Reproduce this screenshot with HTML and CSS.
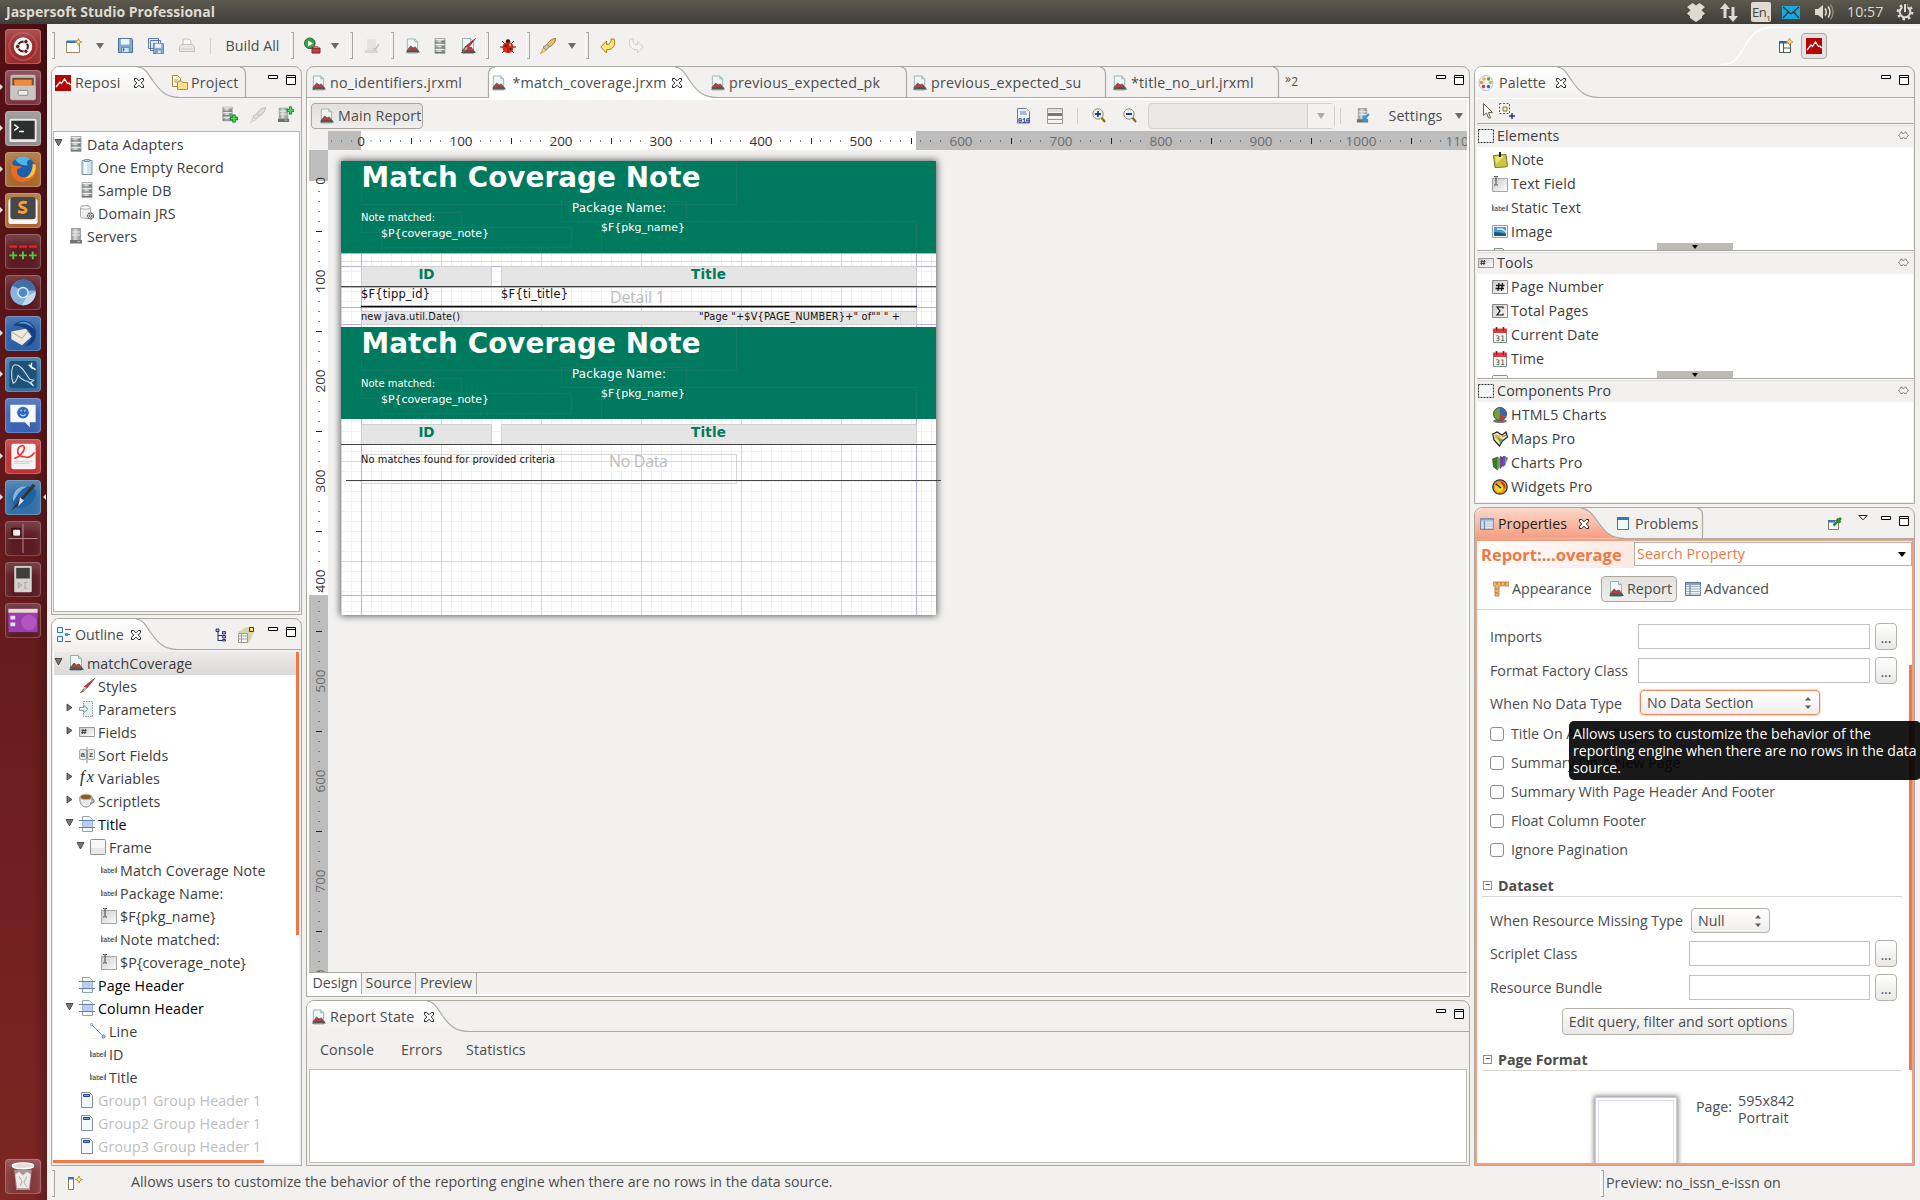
FILE: index.html
```html
<!DOCTYPE html>
<html lang="en">
<head>
<meta charset="utf-8">
<title>Jaspersoft Studio Professional</title>
<link rel="stylesheet" href="styles.css">
</head>
<body>
<svg class="defs" width="0" height="0">
<defs>
<linearGradient id="gTab" x1="0" y1="0" x2="0" y2="1"><stop offset="0" stop-color="#fff"/><stop offset="1" stop-color="#f2f1f0"/></linearGradient>
<linearGradient id="gOrange" x1="0" y1="0" x2="0" y2="1"><stop offset="0" stop-color="#fbd9cb"/><stop offset="1" stop-color="#f59d7e"/></linearGradient>
<linearGradient id="gGrey" x1="0" y1="0" x2="1" y2="1"><stop offset="0" stop-color="#c9c9c9"/><stop offset="1" stop-color="#fff"/></linearGradient>
<linearGradient id="gDb" x1="0" y1="0" x2="1" y2="0"><stop offset="0" stop-color="#8f9191"/><stop offset=".4" stop-color="#dadcdc"/><stop offset="1" stop-color="#8d8f8f"/></linearGradient>
<pattern id="hticks" x="33" y="0" width="100" height="19" patternUnits="userSpaceOnUse">
<path d="M20 9v2M30 9v2M40 9v2M60 9v2M70 9v2M80 9v2" transform="translate(-.5)" stroke="#777"/><path d="M10.500 9v2M90.500 9v2" stroke="#999" transform="translate(-.5)"/><path d="M50.500 7v6" stroke="#222"/></pattern>
<pattern id="vticks" x="0" y="31" width="19" height="100" patternUnits="userSpaceOnUse">
<path d="M9 10.500h2M9 20.500h2M9 30.500h2M9 40.500h2M9 60.500h2M9 70.500h2M9 80.500h2M9 90.500h2" stroke="#777"/><path d="M7 50.500h6" stroke="#222"/></pattern>
<pattern id="grid" x="0" y="0" width="10" height="10" patternUnits="userSpaceOnUse"><path d="M.5 0v10M0 .5h10" stroke="#f1f1f1"/></pattern>
<pattern id="gridbig" x="0" y="0" width="100" height="100" patternUnits="userSpaceOnUse"><path d="M.5 0v100M0 .5h100" stroke="#d8d8d8"/></pattern>

<symbol id="close" viewBox="0 0 12 12"><path d="M1.500 1.500h2.200L6 3.800l2.300-2.300h2.200v2.200L8.200 6l2.300 2.300v2.200H8.300L6 8.200l-2.300 2.300H1.500V8.300L3.800 6 1.500 3.700z" fill="#fff" stroke="#222"/></symbol>
<symbol id="winctl" viewBox="0 0 28 12"><path d="M.5 1.500h9v3h-9zM18.500 1.500h9v9h-9zM18 3.500h10" fill="#fff" stroke="#000"/></symbol>
<symbol id="down" viewBox="0 0 8 6"><path d="M0 0h8L4 6z" fill="#6b6b6b"/></symbol>
<symbol id="open" viewBox="0 0 9 9"><path d="M1 1.500h7L4.500 8z" fill="#777" stroke="#333" stroke-width=".8"/></symbol>
<symbol id="shut" viewBox="0 0 9 9"><path d="M2 1v7l5-3.500z" fill="#777" stroke="#333" stroke-width=".8"/></symbol>
<symbol id="jasper" viewBox="0 0 16 16"><path d="M0 0h16v16H0z" fill="#b30505"/><path d="M1 12l4-5 1.500 1.500L9.500 4l3 4.500L14 8l1.500 2" fill="none" stroke="#fff" stroke-width="1.300"/></symbol>
<symbol id="report" viewBox="0 0 16 16"><path d="M2.500.5h8l3 3v12h-11z" fill="#eef6f6" stroke="#9ab0ae"/><path d="M10.500.5v3h3" fill="#cfe0df" stroke="#9ab0ae"/><path d="M2 13l4-5 2.500 2L11 9l3.500 4.500z" fill="#b5403f" stroke="#444" stroke-width=".7"/><path d="M1 15l1.500-2h12L16 15z" fill="#4d5555"/></symbol>
<symbol id="db" viewBox="0 0 16 16"><path d="M3 .5h10v15H3z" fill="url(#gDb)" stroke="#9a9c9c" stroke-width=".8"/><path d="M3 5h10M3 10h10M3 14.500h10" stroke="#777" stroke-width="1.100"/><path d="M3.500 1.500h9M3.500 6.500h9M3.500 11.500h9" stroke="#eee"/><path d="M10 3.500h2M10 8.500h2M10 13h2" stroke="#5a8a5a"/></symbol>
<symbol id="server" viewBox="0 0 16 16"><path d="M3.500.5h9v12h-9z" fill="url(#gDb)" stroke="#a0a2a2"/><path d="M4 4h8M4 7h8" stroke="#f0f0f0"/><path d="M2 12h12v3.500H2z" fill="#6f7371"/><path d="M9 13.500h3" stroke="#9c9"/></symbol>
<symbol id="dbplus" viewBox="0 0 16 16"><use href="#db" x="-2" width="15" height="15"/><path d="M12 8v8M8 12h8" stroke="#0d8a1c" stroke-width="3.500"/><path d="M12 9v6M9 12h6" stroke="#4fe05a" stroke-width="1.600"/></symbol>
<symbol id="srvplus" viewBox="0 0 16 16"><use href="#server" x="-2" y="1" width="15" height="15"/><path d="M12.500 0v8M8.500 4h8" stroke="#0d8a1c" stroke-width="3.200"/><path d="M12.500 1v6M9.500 4h6" stroke="#4fe05a" stroke-width="1.500"/></symbol>
<symbol id="clip" viewBox="0 0 16 16"><path d="M3 1.500h10v14H3z" fill="#cfe2f2" stroke="#7c93a8"/><path d="M5 3h3v12H5z" fill="#f3f9fe"/><path d="M5.500.5h5v2h-5z" fill="#b8c8d5" stroke="#7c93a8"/></symbol>
<symbol id="domain" viewBox="0 0 16 16"><path d="M1.500 2.500c0-2.500 10-2.500 10 0v9c0 2.500-10 2.500-10 0z" fill="#f0f0f0" stroke="#aaa"/><ellipse cx="6.500" cy="2.500" rx="5" ry="1.700" fill="#fff" stroke="#aaa"/><circle cx="11.500" cy="11" r="3" fill="#ddd" stroke="#666" stroke-width="1.500" stroke-dasharray="2 .8"/><circle cx="11.500" cy="11" r="1.200" fill="#fff" stroke="#666"/></symbol>
<symbol id="label" viewBox="0 0 16 16"><text x="1" y="10.500" font-family="Liberation Sans" font-size="7.500" textLength="14" lengthAdjust="spacingAndGlyphs" fill="#222">label</text><path d="M.5 4.500v6.500M15.500 4.500v6.500" stroke="#777"/></symbol>
<symbol id="field" viewBox="0 0 16 16"><path d="M.5 2.500h15v13H.5z" fill="url(#gGrey)" stroke="#a5a5a5"/><path d="M2 .5h1.500l.5.5.5-.5H6M4 1v7M2 9h1.500l.5-.5.5.5H6" fill="none" stroke="#444"/></symbol>
<symbol id="frame" viewBox="0 0 16 16"><rect x=".5" y=".5" width="15" height="15" rx="1" fill="#f8f8f8" stroke="#8f8f8f"/><path d="M1 9h14v6H1z" fill="#e8e8e8"/></symbol>
<symbol id="band" viewBox="0 0 16 16"><path d="M3.500.5h7l3 3v12h-10z" fill="#f3f9f8" stroke="#8fa5a2"/><path d="M3.500 5h10v6h-10z" fill="#b9cdf5"/><path d="M0 4.500h16M0 11.500h16" stroke="#5f7eb8"/></symbol>
<symbol id="group" viewBox="0 0 16 16"><path d="M2.500.5h8l3 3v12h-11z" fill="#f1f9fa" stroke="#7f9290"/><path d="M4.500 2.500h6v2h-6z" fill="#7ea0ef" stroke="#233fb0"/></symbol>
<symbol id="brush" viewBox="0 0 16 16"><path d="M15.500.5l-8 10-2-2z" fill="#c33" stroke="#822" stroke-width=".8"/><path d="M7 8.500L3.500 12l2 .5L8 10z" fill="#bbb" stroke="#777" stroke-width=".6"/><path d="M4.500 11L.5 15.500l4.500-2z" fill="#8a5a2a"/></symbol>
<symbol id="param" viewBox="0 0 16 16"><path d="M4.500.5h9v15h-9z" fill="#e4efef" stroke="#7f9a98" stroke-dasharray="1.500 1"/><path d="M.5 6.500H5v-2L9 8l-4 3.500v-2H.5z" fill="#f3f9f9" stroke="#7f9a98"/></symbol>
<symbol id="hash" viewBox="0 0 16 16"><path d="M.5 3.500h15v9H.5z" fill="url(#gGrey)" stroke="#9a9a9a"/><path d="M4 5l-.7 5M6.500 5l-.7 5M2.500 6.500h5M2.300 8.500h5" stroke="#333" stroke-width=".9"/></symbol>
<symbol id="sort" viewBox="0 0 16 16"><rect x=".5" y="2.500" width="7" height="10" rx="1.500" fill="#e9e9e9" stroke="#aaa"/><rect x="8.500" y="2.500" width="7" height="10" rx="1.500" fill="#e9e9e9" stroke="#aaa"/><path d="M8 0v16" stroke="#888"/><text x="1.500" y="10" font-family="Liberation Sans" font-size="8" font-weight="bold" fill="#555">a</text><text x="10" y="10" font-family="Liberation Sans" font-size="8" font-weight="bold" fill="#555">z</text></symbol>
<symbol id="fx" viewBox="0 0 16 16"><text x="1" y="12" font-family="Liberation Serif" font-style="italic" font-size="16" fill="#222" textLength="14">fx</text></symbol>
<symbol id="cup" viewBox="0 0 16 16"><path d="M1 4h12c1 6-2 10-6 10S0 10 1 4z" fill="#ececec" stroke="#888"/><ellipse cx="7" cy="4" rx="6" ry="2.800" fill="#8a5a2a" stroke="#c9b9a0"/><path d="M12.500 6c4 0 3 4-1.500 4.500" fill="none" stroke="#888" stroke-width="1.300"/></symbol>
<symbol id="line" viewBox="0 0 16 16"><path d="M1.500 1.500l12 12" stroke="#6f9ad8"/><path d="M1 15.500h12" stroke="#eee"/><circle cx="1.500" cy="1.500" r="1.200" fill="#fff" stroke="#6f9ad8"/><circle cx="13.500" cy="13.500" r="1.500" fill="#bcd" stroke="#4a7acb"/></symbol>
<symbol id="rocket" viewBox="0 0 16 16"><path d="M15.500.5c-3 0-6 2-8.500 6l2.500 2.500c4-2.500 6-5 6-8.500z" fill="#f0c060" stroke="#8a5a20" stroke-width=".8"/><path d="M7 6.500L3 9l3 3 3.500-3z" fill="#c5c5c5" stroke="#777" stroke-width=".8"/><path d="M3.500 10L.5 15.500 6 12.500z" fill="#ffe37a" stroke="#c98a10" stroke-width=".8"/></symbol>
<symbol id="date" viewBox="0 0 16 16"><path d="M1.500 5.500h13v10h-13z" fill="#f6f8f7" stroke="#7c8a88"/><path d="M1 1.500h14v4.500H1z" fill="#dc3b40"/><path d="M4.500 0v3.500M11.500 0v3.500" stroke="#8c1015" stroke-width="1.500"/><text x="3.300" y="13.500" font-family="DejaVu Sans" font-size="7.500" fill="#1d4a44">31</text></symbol>
<symbol id="table" viewBox="0 0 16 14"><path d="M.5.5h15v13H.5z" fill="#eef4fb" stroke="#5d7797"/><path d="M1 1h14v2H1z" fill="#7fa2cc"/><path d="M1 4.500h15M1 7h15M1 9.500h15M1 12h15" stroke="#a0b0c4"/><path d="M5 3v10" stroke="#5d7797"/></symbol>
<symbol id="dash" viewBox="0 0 16 16"><path d="M.5 1.500h15v13H.5z" fill="#f4f6f6" stroke="#333" stroke-dasharray="2 1"/></symbol>
<symbol id="pin" viewBox="0 0 11 9"><path d="M3.500.8L.8 4.500l2.700 3.700L5.500 6M7.500.8l2.700 3.700-2.700 3.700L5.500 6M3.500.8l2 2.200 2-2.200" fill="none" stroke="#555" stroke-dasharray="1.300 .6"/></symbol>
<symbol id="spin" viewBox="0 0 6 12"><path d="M0 3.500l3-3.500 3 3.500zM0 8.500L3 12l3-3.500z" fill="#5c5c5c"/></symbol>
<symbol id="floppy" viewBox="0 0 16 16"><path d="M.5.5h14l1 1v14H.5z" fill="#86a9d4" stroke="#3f6699"/><path d="M3 1h9v6H3z" fill="#f1f5fb"/><path d="M4 10h8v5.500H4z" fill="#d8e2ee" stroke="#3f6699" stroke-width=".7"/><path d="M6 11v3" stroke="#3f6699" stroke-width="1.500"/></symbol>
</defs></svg>

<header class="topbar">
<span class="apptitle">Jaspersoft Studio Professional</span>
<div class="tray">
<svg width="18" height="20" viewBox="0 0 18 20"><path d="M5.500 1L9 3.500 12.500 1 18 5l-3.500 3.200L18 11.500l-3 2.500v2l-6 4-6-4v-2L0 11.500l3.500-3.300L0 5z" fill="#dfdbd2"/></svg>
<svg width="18" height="20" viewBox="0 0 18 20"><path d="M5 1l5 6H6.500v9h-3V7H0zM13 20l-5-6h3.500V5h3v9H18z" fill="#dfdbd2"/></svg>
<span class="kbd">En<sub>1</sub></span>
<svg width="18" height="13" viewBox="0 0 18 13"><path d="M0 0h18v13H0z" fill="#19a7e0"/><path d="M1 1l8 7 8-7M1 12l5.500-6M17 12l-5.500-6" fill="none" stroke="#33322e" stroke-width="1.200"/></svg>
<svg width="20" height="18" viewBox="0 0 20 18"><path d="M0 6h3l5-4v14l-5-4H0z" fill="#dfdbd2"/><path d="M10 5.500q2.500 3.500 0 7M13 3.500q4 5.500 0 11" fill="none" stroke="#dfdbd2" stroke-width="1.600"/><path d="M15.500 1.500q5 7.500 0 15" fill="none" stroke="#8c897f" stroke-width="1.400"/></svg>
<span class="clock">10:57</span>
<svg width="18" height="18" viewBox="0 0 18 18"><circle cx="9" cy="9" r="5.300" fill="none" stroke="#dfdbd2" stroke-width="2"/><circle cx="9" cy="9" r="7.200" fill="none" stroke="#dfdbd2" stroke-width="2.400" stroke-dasharray="2.500 3.150"/><path d="M9 0v9" stroke="#45443f" stroke-width="4.500"/><path d="M9 1v8" stroke="#dfdbd2" stroke-width="2"/></svg>
</div>
</header>

<div class="desktop">
<nav class="launcher">
<div class="tile t-red"><svg viewBox="0 0 36 36"><circle cx="18" cy="18" r="14" fill="none" stroke="#d78a8a" stroke-width="2" opacity=".35"/><circle cx="18" cy="18" r="9.500" fill="#fff"/><circle cx="18" cy="18" r="5" fill="none" stroke="#5c1a1c" stroke-width="2.200"/><circle cx="12.500" cy="18" r="2.200" fill="#5c1a1c" stroke="#fff" stroke-width=".8"/><circle cx="21" cy="13" r="2.200" fill="#5c1a1c" stroke="#fff" stroke-width=".8"/><circle cx="21" cy="23" r="2.200" fill="#5c1a1c" stroke="#fff" stroke-width=".8"/></svg></div>
<div class="tile t-rose run"><svg viewBox="0 0 36 36"><rect x="5" y="5" width="26" height="26" rx="2" fill="#bdb9b3"/><path d="M7 8h22v8H7z" fill="#6b4b35"/><path d="M9 10h18v6H9z" fill="#f08b3e"/><path d="M5 16h26v14H5z" fill="#c9c6c1"/><rect x="13" y="21" width="10" height="5" rx="1" fill="#eee" stroke="#888"/></svg></div>
<div class="tile t-grey run"><svg viewBox="0 0 36 36"><rect x="4" y="8" width="28" height="24" rx="2" fill="#e8e8e8"/><path d="M6 10h24v19H6z" fill="#2c2f2e"/><path d="M9 14l4 3-4 3M14 21h5" fill="none" stroke="#fff" stroke-width="1.500"/></svg></div>
<div class="tile t-orange run"><svg viewBox="0 0 36 36"><circle cx="18" cy="18" r="13" fill="#1d5fa8"/><path d="M10 8a11 11 0 0 1 16 0c-4 0-5 3-3 6-5 0-9-1-13-6z" fill="#4fb4e6"/><path d="M6 10c-3 12 2 21 12 21 9 0 15-7 13-17-1 6-5 12-12 12-6 0-8-4-7-8 2-2 5-1 4-3-4-1-9 0-10-5z" fill="#ee6a1c"/><path d="M31 13c1 7-3 15-12 14 6-2 9-8 9-15z" fill="#ffc23a"/></svg></div>
<div class="tile t-orange run"><svg viewBox="0 0 36 36"><rect x="3" y="6" width="30" height="26" rx="3" fill="#f4f4f4"/><rect x="5" y="4" width="26" height="23" rx="3" fill="#45484a"/><path d="M22 10c-7-2-10 3-4 5s3 7-5 4" fill="none" stroke="#ff9a2e" stroke-width="3"/></svg></div>
<div class="tile t-dark"><svg viewBox="0 0 36 36"><path d="M4 13h8M14 13h8M24 13h8" stroke="#f02020" stroke-width="2.500"/><path d="M8 18v8M4 22h8M18 18v8M14 22h8M28 18v8M24 22h8" stroke="#51c646" stroke-width="2"/></svg></div>
<div class="tile t-dark"><svg viewBox="0 0 36 36"><circle cx="18" cy="18" r="13" fill="#8bb4dc"/><path d="M7 11a13 13 0 0 1 24 5H18z" fill="#3f6fa5"/><path d="M31 17a13 13 0 0 1-14 14l5-9z" fill="#c3dcf3"/><circle cx="18" cy="18" r="6" fill="#e5effa"/><circle cx="18" cy="18" r="4.500" fill="#5089c8"/></svg></div>
<div class="tile t-blue run"><svg viewBox="0 0 36 36"><path d="M8 10C14 2 29 3 31 16c1 9-4 15-11 15 5-3 7-8 6-13-4-6-11-8-18-8z" fill="#153f80"/><path d="M12 8c6-4 14-2 17 5-5-5-11-6-17-5z" fill="#4d9ad6"/><path d="M6 16l15-3 6 8-10 9L6 24z" fill="#f0e8dc"/><path d="M7 17l10 6 6-8" fill="none" stroke="#b0a490"/></svg></div>
<div class="tile t-teal run"><svg viewBox="0 0 36 36"><rect x="4" y="4" width="28" height="28" rx="2" fill="#1f5277"/><path d="M8 27C5 20 6 8 10 8c7 0 11 10 15 15l4 1-3 2 3 4-6-5c-5 0-8-4-10-6-1 3-2 7-5 8z" fill="none" stroke="#cfe4f2" stroke-width="1.100"/><path d="M24 8l4 4M27 6l-1 4 5 3" stroke="#fff" stroke-width="1.500" fill="none"/></svg></div>
<div class="tile t-royal"><svg viewBox="0 0 36 36"><path d="M5 7h26v18h-6v5l-5-5H5z" fill="#f6fafe"/><circle cx="18" cy="15" r="6" fill="#2e66c4"/><path d="M16 12v2M20 12v2M15 17q3 3 6 0" stroke="#fff" fill="none"/></svg></div>
<div class="tile t-crimson run"><svg viewBox="0 0 36 36"><rect x="6" y="5" width="25" height="26" rx="2" fill="#f7f4f3"/><path d="M9 20c8-2 13-12 9-13-6-1-8 9-1 11s10 0 13-4" fill="none" stroke="#e33" stroke-width="1.700"/><path d="M9 23h19M9 25h16" stroke="#ccc"/></svg></div>
<div class="tile t-teal run active"><svg viewBox="0 0 36 36"><ellipse cx="19" cy="18" rx="14" ry="9" transform="rotate(-40 19 18)" fill="#1f62a3"/><path d="M8 23C6 12 14 5 22 7c-7 3-10 8-14 16z" fill="#86b3dc"/><path d="M5 32L28 4l3 2L12 27z" fill="#333"/><path d="M15 18l4 3-6 6z" fill="#ddd"/></svg></div>
<div class="tile t-dark"><svg viewBox="0 0 36 36"><path d="M18 3v30M3 18h30" stroke="#b98a8c"/><path d="M6 7h10v8H6z" fill="#3c0d12"/><path d="M8.500 9.500h6v5h-6z" fill="#eee" stroke="#fff"/></svg></div>
<div class="tile t-dark"><svg viewBox="0 0 36 36"><rect x="9" y="4" width="18" height="27" rx="1" fill="#d5d3d1"/><path d="M11 6h14v11H11z" fill="#3d3f3f"/><path d="M13 21l4 3-4 3zM19 21h4M19 27h4M20 21v6" stroke="#aaa" fill="#bbb"/></svg></div>
<div class="tile t-dark"><svg viewBox="0 0 36 36"><rect x="3" y="6" width="30" height="24" fill="#9a3fae"/><path d="M3 6h30v4H3z" fill="#e6dfcf"/><circle cx="24" cy="20" r="8" fill="#c763cf" opacity=".6"/><path d="M5 13h5v4H5zM5 20h5v4H5z" fill="#eadcf0"/></svg></div>
<div class="tile t-trash"><svg viewBox="0 0 36 36"><ellipse cx="18" cy="7" rx="11" ry="3" fill="#ddd" stroke="#fff" stroke-width="1.500"/><path d="M9 11l2 21h14l2-21z" fill="#b9a9a9" opacity=".8"/><path d="M10 16l4-3 4 4 4-4 4 3-2 14H12z" fill="#eceae8"/><path d="M14 18l3 5-2 5M22 18l-3 6 3 5" stroke="#aaa" fill="none"/></svg></div>
</nav>

<div class="ide">
<div class="toolbar">
<i class="handle"></i>
<svg width="17" height="16" viewBox="0 0 17 16"><path d="M.5 3.500h13v11H.5z" fill="#f7fbff" stroke="#9a8a55"/><path d="M.5 2.500h11v2.500H.5z" fill="#3b74b8"/><path d="M12.500.5l1 2.500 2.500 1-2.500 1-1 2.500-1-2.500-2.500-1 2.500-1z" fill="#ffe79a" stroke="#b58a1a" stroke-width=".8"/></svg>
<svg width="8" height="6"><use href="#down"/></svg>
<svg width="15" height="15"><use href="#floppy"/></svg>
<svg width="16" height="16" viewBox="0 0 16 16"><path d="M.5.5h10v10H.5zM2.500 2.500h10v10h-10z" fill="#dfe8f3" stroke="#5d7ba5"/><use href="#floppy" x="5" y="5" width="11" height="11"/></svg>
<svg width="16" height="16" viewBox="0 0 16 16" opacity=".45"><path d="M4 1h6l2 2v5H4z" fill="#fff" stroke="#888"/><path d="M.5 8.500l2-2h11l2 2v5H.5z" fill="#ddd" stroke="#888"/><path d="M2 11h12" stroke="#999"/></svg>
<i class="sep"></i>
<span class="buildall">Build All</span>
<i class="handle"></i>
<svg width="17" height="17" viewBox="0 0 17 17"><circle cx="5.800" cy="6.300" r="5.300" fill="#3aa04a" stroke="#1c6b2a"/><path d="M4 3.500l5 3-5 3z" fill="#fff"/><path d="M8 11h8v5H8z" fill="#c33a3a" stroke="#8a1c1c"/><path d="M10 11V9.500h4V11M8 13.500h8" stroke="#a55" fill="none" stroke-width=".8"/></svg>
<svg width="8" height="6"><use href="#down"/></svg>
<i class="handle"></i>
<svg width="16" height="16" viewBox="0 0 16 16" opacity=".35"><path d="M3 1h9v11H3z" fill="#ccc"/><path d="M1 12h13v3H1z" fill="#aaa"/><path d="M9 10l2 2 4-6" stroke="#777" fill="none" stroke-width="1.500"/></svg>
<i class="handle"></i>
<svg width="15" height="16"><use href="#report"/></svg>
<svg width="16" height="16"><use href="#db"/></svg>
<svg width="16" height="16"><use href="#report"/><use href="#brush"/></svg>
<i class="handle"></i>
<svg width="16" height="16" viewBox="0 0 16 16"><path d="M2 3l3 3M14 3l-3 3M0 9h16M2 15l3-3M14 15l-3-3" stroke="#222"/><circle cx="8" cy="3.500" r="2.300" fill="#222"/><ellipse cx="8" cy="9.500" rx="5.500" ry="5.500" fill="#d92c0d"/><path d="M8 4v11" stroke="#8a1403"/><circle cx="5.500" cy="8" r="1" fill="#300"/><circle cx="10.500" cy="11" r="1" fill="#300"/><circle cx="10" cy="7" r="1.200" fill="#ff9a6a"/></svg>
<i class="handle"></i>
<svg width="16" height="16"><use href="#rocket"/></svg>
<svg width="8" height="6"><use href="#down"/></svg>
<i class="handle"></i>
<svg width="16" height="16" viewBox="0 0 16 16"><path d="M.8 9L6.500 3v3.500C11 6.500 11 4 11 1l3 0c2 5 0 11-7.500 10.800V15z" fill="#ffe27a" stroke="#a87a10"/></svg>
<svg width="16" height="16" viewBox="0 0 16 16"><path d="M15.200 9L9.500 3v3.500C5 6.500 5 4 5 1L2 1c-2 5 0 11 7.500 10.800V15z" fill="#f4f3f2" stroke="#d0cfcc"/></svg>
<div class="perspective">
<svg class="curve" width="210" height="41" viewBox="0 0 210 41"><path d="M0 39.500H4C26 38 22 6 48 2.500H210" fill="none" stroke="#fff" stroke-width="1.500"/></svg>
<svg width="14" height="16" viewBox="0 0 14 16"><path d="M.5 3.500h11v11H.5z" fill="#fff" stroke="#4a5f4f"/><path d="M0 3h10v2.500H0z" fill="#2d62ab"/><path d="M4.500 5v9M4.500 10h7" stroke="#4a5f4f"/><path d="M10.500 0l1 2.500L14 4l-2.500 1-1 2.500-1-2.500L7 4l2.500-1.500z" fill="#ffe17a" stroke="#a8861a" stroke-width=".7"/></svg>
<span class="pbtn"><svg width="16" height="16"><use href="#jasper"/></svg></span>
</div>
</div>

<main class="panels">
<div class="col">
<section class="panel repo">
<div class="head head-repo">
<svg class="shape" width="249" height="31"><path d="M0 31V0H86C94 1 96 7 101 14C108 24 114 30.500 128 30.500z" fill="url(#gTab)"/><path d="M86 0C94 1 96 7 101 14C108 24 114 30.500 128 30.500H249M188 0q5.500 1 5.500 7v24" fill="none" stroke="#aaa9a2" stroke-width="1.200"/></svg>
<svg width="16" height="16"><use href="#jasper"/></svg><span>Reposi</span><svg width="12" height="12"><use href="#close"/></svg><b></b>
<svg width="16" height="16" viewBox="0 0 16 16"><path d="M.5.5h5l3 3v8h-8z" fill="#fff8dc" stroke="#a08840"/><path d="M2 5h4M2 7h4" stroke="#a98"/><path d="M5.500 7.500l1-1.500h3l1 1.500h5v7h-10z" fill="#fce08a" stroke="#b58a2a"/></svg><span>Project</span>
<svg class="ctl" width="28" height="12"><use href="#winctl"/></svg>
</div>
<div class="minibar"><svg width="16" height="17"><use href="#dbplus"/></svg><svg width="16" height="16" class="dis"><use href="#rocket"/></svg><svg width="16" height="17"><use href="#srvplus"/></svg></div>
<ul class="tree boxed">
<li><svg class="tw"><use href="#open"/></svg><svg class="ic"><use href="#db"/></svg><span>Data Adapters</span></li>
<li class="l1"><i class="tw"></i><svg class="ic"><use href="#clip"/></svg><span>One Empty Record</span></li>
<li class="l1"><i class="tw"></i><svg class="ic"><use href="#db"/></svg><span>Sample DB</span></li>
<li class="l1"><i class="tw"></i><svg class="ic"><use href="#domain"/></svg><span>Domain JRS</span></li>
<li><i class="tw"></i><svg class="ic"><use href="#server"/></svg><span>Servers</span></li>
</ul>
</section>
<section class="panel outline">
<div class="head head-outline">
<svg class="shape" width="249" height="31"><path d="M0 31V0H84C92 1 94 7 99 14C106 24 112 30.500 126 30.500z" fill="url(#gTab)"/><path d="M84 0C92 1 94 7 99 14C106 24 112 30.500 126 30.500H249" fill="none" stroke="#aaa9a2" stroke-width="1.200"/></svg>
<svg width="14" height="16" viewBox="0 0 14 16"><path d="M.5.5h5v5h-5zM.5 9.500h5v5h-5z" fill="#e8f3fb" stroke="#2a76b0"/><path d="M8 2.500h6M8 7.500h5M8 14.500h6" stroke="#2a76b0"/><path d="M8 6h3v3H8z" fill="#4e93c8"/></svg><span>Outline</span><svg width="12" height="12"><use href="#close"/></svg><b></b>
<svg width="12" height="14" viewBox="0 0 12 14"><path d="M3 3v9.500h4M3 7.500h4" fill="none" stroke="#222a6a"/><path d="M1 1h3v2.500H1zM7.500 3.500h3V6h-3zM7.500 7.500h3V10h-3zM7.500 11.500h3V13h-3z" fill="#aac" stroke="#222a6a" stroke-width=".9"/></svg>
<svg width="16" height="16" viewBox="0 0 16 16"><path d="M0 5L8 0h8v5l-5 11H0z" fill="#d8d6b0"/><path d="M.5 6.500h9v9h-9zM.5 9h9M.5 12h9M3.500 7v8" fill="#fff" stroke="#999"/><path d="M11.500.5h4v4h-4z" fill="#ffe45a" stroke="#333"/></svg>
<svg class="ctl" width="28" height="12"><use href="#winctl"/></svg>
</div>
<div class="outbody">
<ul class="tree">
<li class="sel"><svg class="tw"><use href="#open"/></svg><svg class="ic"><use href="#report"/></svg><span>matchCoverage</span></li>
<li class="l1"><i class="tw"></i><svg class="ic"><use href="#brush"/></svg><span>Styles</span></li>
<li class="l1"><svg class="tw"><use href="#shut"/></svg><svg class="ic"><use href="#param"/></svg><span>Parameters</span></li>
<li class="l1"><svg class="tw"><use href="#shut"/></svg><svg class="ic"><use href="#hash"/></svg><span>Fields</span></li>
<li class="l1"><i class="tw"></i><svg class="ic"><use href="#sort"/></svg><span>Sort Fields</span></li>
<li class="l1"><svg class="tw"><use href="#shut"/></svg><svg class="ic"><use href="#fx"/></svg><span>Variables</span></li>
<li class="l1"><svg class="tw"><use href="#shut"/></svg><svg class="ic"><use href="#cup"/></svg><span>Scriptlets</span></li>
<li class="l1 dk"><svg class="tw"><use href="#open"/></svg><svg class="ic"><use href="#band"/></svg><span>Title</span></li>
<li class="l2"><svg class="tw"><use href="#open"/></svg><svg class="ic"><use href="#frame"/></svg><span>Frame</span></li>
<li class="l3"><i class="tw"></i><svg class="ic"><use href="#label"/></svg><span>Match Coverage Note</span></li>
<li class="l3"><i class="tw"></i><svg class="ic"><use href="#label"/></svg><span>Package Name:</span></li>
<li class="l3"><i class="tw"></i><svg class="ic"><use href="#field"/></svg><span>$F{pkg_name}</span></li>
<li class="l3"><i class="tw"></i><svg class="ic"><use href="#label"/></svg><span>Note matched:</span></li>
<li class="l3"><i class="tw"></i><svg class="ic"><use href="#field"/></svg><span>$P{coverage_note}</span></li>
<li class="l1 dk"><i class="tw"></i><svg class="ic"><use href="#band"/></svg><span>Page Header</span></li>
<li class="l1 dk"><svg class="tw"><use href="#open"/></svg><svg class="ic"><use href="#band"/></svg><span>Column Header</span></li>
<li class="l2"><i class="tw"></i><svg class="ic"><use href="#line"/></svg><span>Line</span></li>
<li class="l2"><i class="tw"></i><svg class="ic"><use href="#label"/></svg><span>ID</span></li>
<li class="l2"><i class="tw"></i><svg class="ic"><use href="#label"/></svg><span>Title</span></li>
<li class="l1 off"><i class="tw"></i><svg class="ic"><use href="#group"/></svg><span>Group1 Group Header 1</span></li>
<li class="l1 off"><i class="tw"></i><svg class="ic"><use href="#group"/></svg><span>Group2 Group Header 1</span></li>
<li class="l1 off"><i class="tw"></i><svg class="ic"><use href="#group"/></svg><span>Group3 Group Header 1</span></li>
</ul>
<i class="vbar"></i><i class="hbar"></i>
</div>
</section>
</div>

<div class="col">
<section class="panel editor">
<div class="head head-editor">
<svg class="shape" width="1162" height="31"><path d="M181.500 31V7Q181.500 0 188 0H368C376 1 378 7 383 14C390 24 396 30.500 410 30.500V31z" fill="#fff"/><path d="M0 30.500H181.500V7Q181.500 1 188 0M368 0C376 1 378 7 383 14C390 24 396 30.500 410 30.500H1162M594 0q5.500 1 5.500 7v24M793 0q5.500 1 5.500 7v24M966 0q5.500 1 5.500 7v24" fill="none" stroke="#aaa9a2" stroke-width="1.200"/></svg>
<svg width="15" height="16"><use href="#report"/></svg><span>no_identifiers.jrxml</span>
<svg width="15" height="16"><use href="#report"/></svg><span>*match_coverage.jrxm</span><svg width="12" height="12"><use href="#close"/></svg><b></b>
<svg width="15" height="16"><use href="#report"/></svg><span>previous_expected_pk</span>
<svg width="15" height="16"><use href="#report"/></svg><span>previous_expected_su</span>
<svg width="15" height="16"><use href="#report"/></svg><span>*title_no_url.jrxml</span>
<span class="overflow">»<sub>2</sub></span>
<svg class="ctl" width="28" height="12"><use href="#winctl"/></svg>
</div>
<div class="edwrap">
<div class="edbar">
<span class="mainrep"><svg width="15" height="16"><use href="#report"/></svg><span>Main Report</span></span>
<svg width="14" height="16" viewBox="0 0 14 16"><path d="M.5.500h9l3 3V15H.5z" fill="#eef5fb" stroke="#5c7fae"/><path d="M9.500.5v3h3z" fill="#f5d77a"/><path d="M3 4h6M3 6h7" stroke="#5c7fae"/><text x="1" y="14.500" font-family="Liberation Mono" font-size="7" font-weight="bold" textLength="12" fill="#1b3a7a">010</text></svg>
<svg width="16" height="16" viewBox="0 0 16 16"><path d="M.5.5h15v15H.5z" fill="#f5f5f5" stroke="#999"/><path d="M1 1h14v3H1z" fill="#ddd"/><path d="M1 5h14v3H1z" fill="#777"/><path d="M1 11.500h14" stroke="#999"/></svg>
<i class="sep"></i>
<svg width="14" height="15" viewBox="0 0 14 15"><path d="M9 9l4 5" stroke="#8a6a20" stroke-width="2.200"/><circle cx="6" cy="6" r="5.200" fill="#eaf2fc" stroke="#a08a4a"/><path d="M3 6h6M6 3v6" stroke="#1d3c9e" stroke-width="1.800"/></svg>
<svg width="14" height="15" viewBox="0 0 14 15"><path d="M9 9l4 5" stroke="#8a6a20" stroke-width="2.200"/><circle cx="6" cy="6" r="5.200" fill="#eaf2fc" stroke="#a08a4a"/><path d="M3 6h6" stroke="#1d3c9e" stroke-width="1.800"/></svg>
<span class="zoomcombo"><i></i><em><svg width="8" height="6" opacity=".5"><use href="#down"/></svg></em></span>
<i class="sep"></i>
<svg width="14" height="16" viewBox="0 0 14 16"><use href="#server" x="-1" width="15" height="15"/><path d="M13 6L8 11M7.500 7.500V12H12" stroke="#2a9be0" stroke-width="2" fill="none"/></svg>
<span class="settings">Settings</span>
<svg width="8" height="6"><use href="#down"/></svg>
</div>
<svg class="hruler" width="1140" height="19">
<path d="M0 0h33v19H0zM588 0h552v19H588z" fill="#bdbdbd"/><path d="M33 0h555v19H33z" fill="#fff"/><path d="M3.500 9v2M13.500 9v2M23.500 9v2" stroke="#888"/><rect x="33" width="1107" height="19" fill="url(#hticks)"/>
<g class="rl"><text x="33" y="15">0</text><text x="133" y="15">100</text><text x="233" y="15">200</text><text x="333" y="15">300</text><text x="433" y="15">400</text><text x="533" y="15">500</text></g>
<g class="rl far"><text x="633" y="15">600</text><text x="733" y="15">700</text><text x="833" y="15">800</text><text x="933" y="15">900</text><text x="1033" y="15">1000</text><text x="1133" y="15">1100</text></g>
</svg>
<div class="stage">
<svg class="vruler" width="19" height="822">
<path d="M0 0h19v31H0zM0 445h19v377H0z" fill="#bdbdbd"/><path d="M0 31h19v414H0z" fill="#fff"/><rect y="31" width="19" height="791" fill="url(#vticks)"/>
<g class="rl"><text transform="translate(16 31) rotate(-90)">0</text><text transform="translate(16 131) rotate(-90)">100</text><text transform="translate(16 231) rotate(-90)">200</text><text transform="translate(16 331) rotate(-90)">300</text><text transform="translate(16 431) rotate(-90)">400</text></g>
<g class="rl far"><text transform="translate(16 531) rotate(-90)">500</text><text transform="translate(16 631) rotate(-90)">600</text><text transform="translate(16 731) rotate(-90)">700</text><text transform="translate(16 831) rotate(-90)">800</text></g>
</svg>
<div class="sheet">
<svg class="page" width="601" height="454" viewBox="0 0 601 454">
<path d="M0 0h595v454H0z" fill="#fff"/>
<rect width="595" height="454" fill="url(#grid)"/><rect width="595" height="454" fill="url(#gridbig)"/>
<g id="hdr">
<path d="M0 0h595v92H0z" fill="#007a5e"/>
<path d="M20.500 0v43.500h375V0M20.500 51.500h100v20h-100zM40.500 66.500h190v20h-190zM220.500 40.500h125v20h-125zM260.500 92V60.500h315V92" fill="none" stroke="#20786c" stroke-dasharray="2 1"/>
<g fill="#fff" class="dj">
<text x="20.500" y="25.500" font-weight="bold" font-size="27.800" textLength="339">Match Coverage Note</text>
<text x="20" y="60" font-size="10" textLength="74">Note matched:</text>
<text x="40" y="76" font-size="11" textLength="108">$P{coverage_note}</text>
<text x="231" y="51" font-size="11.800" textLength="94">Package Name:</text>
<text x="260" y="69.500" font-size="11" textLength="84">$F{pkg_name}</text>
</g></g>
<use href="#hdr" y="166"/>
<path d="M20.500 92v74M575.500 92v74M20.500 258v196M575.500 258v196M0 92.500h595M0 105.500h595M0 126.500h595M0 146.500h595M0 163.500h595M0 434.500h595" stroke="#b3aef0"/>
<path d="M20.500 105.500h130v20h-130zM160.500 105.500h415v20h-415zM20.500 150.500h555v13h-555zM20.500 263.500h130v20h-130zM160.500 263.500h415v20h-415z" fill="#e5e5e5" stroke="#cfcfcf"/>
<path d="M20.500 293.500h375v29h-375M120.500 150v13M559.500 150v13" fill="none" stroke="#d4d4d4"/>
<path d="M0 125.500h595M0 283.500h595M5 319.500h595" stroke="#444"/><path d="M20 145.500h556" stroke="#000" stroke-width="1.300"/>
<g class="ghost"><text x="269" y="142" textLength="55">Detail 1</text><text x="268" y="305.500" textLength="59">No Data</text></g>
<g class="dj" fill="#007a5e" font-weight="bold" font-size="13.500"><text x="77.500" y="117.500" textLength="16">ID</text><text x="350" y="117.500" textLength="35">Title</text><text x="77.500" y="275.500" textLength="16">ID</text><text x="350" y="275.500" textLength="35">Title</text></g>
<g class="dj" fill="#111"><text x="20" y="137" font-size="11.500" textLength="69">$F{tipp_id}</text><text x="160" y="137" font-size="11.500" textLength="67">$F{ti_title}</text>
<text x="20" y="159" font-size="9.800" textLength="99">new java.util.Date()</text><text x="358" y="159" font-size="9.800" textLength="201">"Page "+$V{PAGE_NUMBER}+" of"" " +</text><text x="20" y="302" font-size="9.800" textLength="194">No matches found for provided criteria</text></g>
</svg>
</div>
</div>
<div class="edtabs"><span class="on">Design</span><span>Source</span><span>Preview</span></div>
</div>
</section>
<section class="panel state">
<div class="head head-state">
<svg class="shape" width="1162" height="31"><path d="M0 31V0H120C128 1 130 7 135 14C142 24 148 30.500 162 30.500z" fill="url(#gTab)"/><path d="M120 0C128 1 130 7 135 14C142 24 148 30.500 162 30.500H1162" fill="none" stroke="#aaa9a2" stroke-width="1.200"/></svg>
<svg width="15" height="16"><use href="#report"/></svg><span>Report State</span><svg width="12" height="12"><use href="#close"/></svg>
<svg class="ctl" width="28" height="12"><use href="#winctl"/></svg>
</div>
<div class="statetabs"><span>Console</span><span>Errors</span><span>Statistics</span></div>
<div class="console"></div>
</section>
</div>

<div class="col">
<section class="panel palette">
<div class="head head-palette">
<svg class="shape" width="439" height="31"><path d="M0 31V0H82C90 1 92 7 97 14C104 24 110 30.500 124 30.500z" fill="url(#gTab)"/><path d="M82 0C90 1 92 7 97 14C104 24 110 30.500 124 30.500H439" fill="none" stroke="#aaa9a2" stroke-width="1.200"/></svg>
<svg width="16" height="16" viewBox="0 0 16 16"><ellipse cx="8" cy="8" rx="7" ry="7.500" fill="#f2f5fc" stroke="#b5c0dc"/><circle cx="6" cy="4" r="1.700" fill="#f0b41c"/><circle cx="10.500" cy="4" r="1.700" fill="#58a92c"/><circle cx="3.500" cy="7.500" r="1.700" fill="#f08a1c"/><circle cx="12.500" cy="7.500" r="1.700" fill="#d5b81c"/><circle cx="5.500" cy="11.500" r="1.700" fill="#d8342a"/><circle cx="10.500" cy="11.500" r="1.700" fill="#2c5fc9"/></svg><span>Palette</span><svg width="12" height="12"><use href="#close"/></svg>
<svg class="ctl" width="28" height="12"><use href="#winctl"/></svg>
</div>
<div class="palbar"><svg width="10" height="16" viewBox="0 0 10 16"><path d="M.5.5v12l3-2.500 2 5h2l-2-5.500h4z" fill="#fff" stroke="#6a6040"/></svg><svg width="16" height="16" viewBox="0 0 16 16"><path d="M.5.5h10v10H.5z" fill="none" stroke="#6a6040" stroke-dasharray="2 1.500"/><path d="M4 4h4v4H4z" fill="#f2edc8" stroke="#8a7a30"/><path d="M13 10v6M10 13h6" stroke="#1d3c7e" stroke-width="1.500"/></svg></div>
<div class="drawer d1"><h3><svg class="ic"><use href="#dash"/></svg><span>Elements</span><svg class="pin"><use href="#pin"/></svg></h3>
<ul><li><svg class="ic" viewBox="0 0 16 16"><path d="M1.500 3.500L14 2.500 15.500 14 13 15l-10 .5z" fill="#cdc843" stroke="#7a7620"/><path d="M3 5l9-1-8 8z" fill="#e9e68a"/><path d="M8 0v5" stroke="#222" stroke-width="2"/></svg><span>Note</span></li>
<li><svg class="ic"><use href="#field"/></svg><span>Text Field</span></li>
<li><svg class="ic"><use href="#label"/></svg><span>Static Text</span></li>
<li><svg class="ic" viewBox="0 0 16 16"><path d="M.5 1.500h15v12H.5z" fill="#fff" stroke="#8aa0a8"/><path d="M2 3h12v9H2z" fill="#4d9ad8"/><path d="M2 8q5 0 12 2v2H2z" fill="#1c5a60"/><path d="M5 5h5l4 3" stroke="#e2f2ff" stroke-width="1.500" fill="none"/></svg><span>Image</span></li>
<li><svg class="ic"><use href="#group"/></svg><span>Break</span></li></ul><i class="more"><svg width="6" height="4"><path d="M0 0h6L3 4z"/></svg></i></div>
<div class="drawer d2"><h3><svg class="ic"><use href="#hash"/></svg><span>Tools</span><svg class="pin"><use href="#pin"/></svg></h3>
<ul><li><svg class="ic" viewBox="0 0 16 16"><path d="M.5 1.500h15v13H.5z" fill="url(#gGrey)" stroke="#888"/><path d="M7 4l-1 8M10.500 4l-1 8M4 6.500h8.500M3.500 9.500H12" stroke="#111" stroke-width="1.300"/></svg><span>Page Number</span></li>
<li><svg class="ic" viewBox="0 0 16 16"><path d="M.5 1.500h15v13H.5z" fill="url(#gGrey)" stroke="#888"/><path d="M11 5.500V4H5l3 4-3 4h6v-1.500" fill="none" stroke="#111" stroke-width="1.200"/></svg><span>Total Pages</span></li>
<li><svg class="ic"><use href="#date"/></svg><span>Current Date</span></li>
<li><svg class="ic"><use href="#date"/></svg><span>Time</span></li>
<li><svg class="ic"><use href="#frame"/></svg><span>Percentage</span></li></ul><i class="more"><svg width="6" height="4"><path d="M0 0h6L3 4z"/></svg></i></div>
<div class="drawer d3"><h3><svg class="ic"><use href="#dash"/></svg><span>Components Pro</span><svg class="pin"><use href="#pin"/></svg></h3>
<ul><li><svg class="ic" viewBox="0 0 16 16"><ellipse cx="8" cy="14" rx="7" ry="2" fill="#777"/><circle cx="8" cy="7" r="6.500" fill="#6ba53c" stroke="#444"/><path d="M8 7V.5A6.500 6.500 0 0 1 13.500 10z" fill="#3967b4"/><path d="M8 7l5.500 3.500A6.500 6.500 0 0 1 7 13.500z" fill="#bf3a34"/></svg><span>HTML5 Charts</span></li>
<li><svg class="ic" viewBox="0 0 16 16"><path d="M.7 3L5 1l5 3 4-3 1.500 5-5 4-3 5L2 9z" fill="#f3f0d6" stroke="#222" stroke-width="1.200"/><path d="M3 3l6 2-2 5-4-3z" fill="#d8b83a"/><path d="M6 7l5 1-3 5z" fill="#5fae46"/><path d="M10 6l4-2" stroke="#d04030"/></svg><span>Maps Pro</span></li>
<li><svg class="ic" viewBox="0 0 16 16"><path d="M.5 4l5-2v13l-4-3z" fill="#3c7d2a" stroke="#333" stroke-width=".6"/><path d="M5.500 2l4 1v8l-4 4z" fill="#69b04a"/><path d="M8 1l3 1v9l-3 3z" fill="#7a3fa0"/><path d="M11 1h2.500v9L11 12z" fill="#3a68c0"/><path d="M13.500 1.500L16 3l-2.500 6z" fill="#d24a2c"/></svg><span>Charts Pro</span></li>
<li><svg class="ic" viewBox="0 0 16 16"><circle cx="8" cy="8" r="7.200" fill="#e89c1c" stroke="#333" stroke-width="1.300"/><path d="M8 2a6 6 0 0 1 5 8z" fill="#d0341c"/><circle cx="7" cy="9" r="4" fill="#f4d62a"/><path d="M4 5l5 4" stroke="#222" stroke-width="1.500"/></svg><span>Widgets Pro</span></li></ul></div>
</section>

<section class="panel props">
<div class="head head-props">
<svg class="shape" width="439" height="31"><path d="M0 31V0H106C114 1 118 7 123 14C130 24 136 30.500 150 30.500z" fill="url(#gOrange)"/><path d="M106 0C114 1 118 7 123 14C130 24 136 30.500 150 30.500H439M222 0q5.500 1 5.500 7v24" fill="none" stroke="#aaa9a2" stroke-width="1.200"/></svg>
<svg width="14" height="12"><use href="#table"/></svg><span class="blk">Properties</span><svg width="12" height="12"><use href="#close"/></svg><b></b>
<svg width="12" height="13" viewBox="0 0 12 13"><path d="M.5.5h11v12H.5z" fill="#f4f9ff" stroke="#4b75a8"/><path d="M0 0h12v3H0z" fill="#3b74b8"/></svg><span>Problems</span><b></b>
<svg width="14" height="14" viewBox="0 0 14 14"><path d="M.5 3.500h10v9H.5z" fill="#f4f9ff" stroke="#8a7a50"/><path d="M0 3h7v2.500H0z" fill="#3b74b8"/><path d="M13 1L5.500 8.500M9 1.500l3.500 4" stroke="#2a8a30" stroke-width="2.500"/></svg>
<svg class="menu" width="10" height="6" viewBox="0 0 10 6"><path d="M.8.500h8.400L5 4.800z" fill="#fff" stroke="#222"/></svg>
<svg class="ctl" width="28" height="12"><use href="#winctl"/></svg>
</div>
<div class="pbody">
<div class="ptitle"><h2>Report:...overage</h2><span class="search">Search Property<svg width="8" height="5"><path d="M0 0h8L4 5z"/></svg></span></div>
<div class="ptabs"><span class="pt"><svg class="ic" viewBox="0 0 16 16"><path d="M0 1h16v4H6v10H2V5H0z" fill="#edb672" stroke="#b87a35" stroke-width=".8"/><path d="M4 1v3M8 1v3M12 1v3M2 8h3M2 12h3" stroke="#9a6020" stroke-width=".8"/></svg><span>Appearance</span></span><span class="pt on"><svg class="ic"><use href="#report"/></svg><span>Report</span></span><span class="pt"><svg class="ic" viewBox="0 0 16 14"><use href="#table"/></svg><span>Advanced</span></span></div>
<div class="form">
<div class="row r1"><label>Imports</label><i class="inp"></i><i class="dots">...</i></div>
<div class="row r2"><label>Format Factory Class</label><i class="inp"></i><i class="dots">...</i></div>
<div class="row r3"><label>When No Data Type</label><span class="combo focus"><span>No Data Section</span><svg width="6" height="12"><use href="#spin"/></svg></span></div>
<div class="chk"><i></i><span>Title On A New Page</span></div>
<div class="chk"><i></i><span>Summary On A New Page</span></div>
<div class="chk"><i></i><span>Summary With Page Header And Footer</span></div>
<div class="chk"><i></i><span>Float Column Footer</span></div>
<div class="chk"><i></i><span>Ignore Pagination</span></div>
<h4 class="h-data"><i>−</i><span>Dataset</span></h4>
<div class="row s1"><label>When Resource Missing Type</label><span class="combo"><span>Null</span><svg width="6" height="12"><use href="#spin"/></svg></span></div>
<div class="row s2"><label>Scriplet Class</label><i class="inp"></i><i class="dots">...</i></div>
<div class="row s2 s3"><label>Resource Bundle</label><i class="inp"></i><i class="dots">...</i></div>
<div class="edit"><span>Edit query, filter and sort options</span></div>
<h4 class="h-page"><i>−</i><span>Page Format</span></h4>
<div class="fmt"><div class="thumb"></div><span class="pg">Page:</span><span class="dim">595x842<br>Portrait</span></div>
</div>
<i class="scroll"></i>
</div>
<div class="tip"><span>Allows users to customize the behavior of the</span><span>reporting engine when there are no rows in the data</span><span>source.</span></div>
</section>
</div>
</main>

<footer class="status"><i class="handle"></i><svg width="15" height="16" viewBox="0 0 15 16"><path d="M.5 3.500h5v11h-5z" fill="#fff" stroke="#8a7a50"/><path d="M0 2h6v2.500H0z" fill="#3b74b8"/><path d="M11 1l1 2.500L14.500 4.500 12 5.500 11 8l-1-2.500-2.500-1L10 3.500z" fill="#fff0b0" stroke="#a8861a" stroke-width=".8"/></svg><span class="msg">Allows users to customize the behavior of the reporting engine when there are no rows in the data source.</span><i class="handle"></i><span class="prev">Preview: no_issn_e-issn on</span></footer>
</div>
</div>
</body>
</html>
```
FILE: styles.css
```css
* { box-sizing: border-box; }
html, body { margin: 0; width: 1920px; height: 1200px; overflow: hidden; }
body { display: flex; flex-direction: column; background: #f2f1f0; color: #4c4c4c; font: 14.250px/20px "Open Sans", "Noto Sans", sans-serif; white-space: nowrap; }
i, em { font-style: normal; }
ul { list-style: none; margin: 0; padding: 0; }
h2, h3, h4 { margin: 0; font-size: inherit; font-weight: normal; }
svg { display: block; flex: none; }
.defs { position: absolute; }
sub { font-size: 10px; line-height: 0; }

/* system panel and launcher */
.topbar { height: 24px; flex: none; display: flex; justify-content: space-between; align-items: center; padding: 0 6px; background: linear-gradient(#5c594e, #3e3d38); color: #dfdbd2; }
.apptitle { font-weight: bold; font-size: 14px; }
.tray { display: grid; grid-template-columns: 33px 31px 31px 33px 32px 49px 18px; align-items: center; }
.kbd { width: 20px; height: 20px; background: #dfdbd2; color: #45443f; border-radius: 2px; font-size: 13px; line-height: 20px; padding-left: 1px; letter-spacing: -.5px; }
.kbd sub { font-size: 8px; }
.desktop { flex: 1; display: flex; min-height: 0; }
.launcher { width: 47px; flex: none; display: flex; flex-direction: column; gap: 6px; padding: 5px 0 6px 5px; background: linear-gradient(90deg, rgba(0,0,0,0) 70%, rgba(0,0,0,.22)), linear-gradient(#500f14, #7d2623); }
.tile { position: relative; width: 36px; height: 35px; border-radius: 4px; box-shadow: inset 0 0 0 1px rgba(255,255,255,.2), inset 0 8px 10px rgba(255,255,255,.18); }
.tile svg { width: 36px; height: 35px; }
.run::before { content: ""; position: absolute; left: -5px; top: 14px; border: 3.500px solid transparent; border-left-color: #ddd; border-right: 0; }
.active::after { content: ""; position: absolute; left: 38px; top: 14px; border: 3.500px solid transparent; border-right-color: #ddd; border-left: 0; }
.t-red { background: #9c2c2c; } .t-rose { background: #7c3240; } .t-grey { background: #918d8d; } .t-orange { background: #a8692f; }
.t-dark { background: #5b1b22; } .t-blue { background: #2c5fa5; } .t-teal { background: #3470a5; } .t-royal { background: #3b62b4; } .t-crimson { background: #b93434; }
.t-trash { background: #84383a; margin-top: auto; }

/* main toolbar */
.ide { flex: 1; display: flex; flex-direction: column; min-width: 0; }
.toolbar { height: 42px; flex: none; display: grid; padding: 1px 0 0 5px; align-items: center; justify-items: center; grid-template-columns: 3px 38px 14px 36px 26px 36px 10px 75px 4px 36px 10px 13px 38px 3px 36px 20px 36px 3px 38px 3px 36px 12px 11px 38px 18px 1fr; }
.handle { justify-self: end; width: 3px; height: 27px; border: 1px solid #a9a8a2; border-left: 0; box-shadow: -1px 0 #fff; }
.sep { width: 1px; height: 16px; background: #d2d1ce; }
.perspective { position: relative; justify-self: end; width: 200px; height: 41px; display: grid; grid-template-columns: 59px 22px 26px; align-items: center; }
.perspective > svg:not(.curve) { grid-column: 2; }
.curve { position: absolute; left: 0; top: 0; }
.pbtn { width: 26px; height: 26px; border: 1px solid #aaa69f; border-radius: 4px; background: #e4e2e0; display: grid; place-items: center; }

/* view stacks */
.panels { height: 1100px; flex: none; display: grid; grid-template: 1100px / 251px 1164px 441px; column-gap: 4px; padding-left: 4px; }
.col { display: flex; flex-direction: column; gap: 3px; min-width: 0; min-height: 0; }
.panel { display: flex; flex-direction: column; border: 1px solid #aaa9a2; border-radius: 8px 8px 0 0; overflow: hidden; }
.repo { height: 549px; } .outline { height: 548px; } .editor { height: 931px; } .state { height: 166px; } .palette { height: 438px; }
.head { position: relative; height: 31px; flex: none; display: grid; align-items: center; justify-items: start; }
.head > :not(.shape) { position: relative; }
.head .shape { position: absolute; left: 0; top: 0; }
.head .ctl { justify-self: end; align-self: start; margin: 7px 5px 0 0; }
.head-repo { grid-template-columns: 20px 58px 21px 18px 19px 56px 1fr; padding-left: 3px; letter-spacing: .15px; }
.head-outline { grid-template-columns: 18px 55px 13px 72px 23px 24px 1fr; padding-left: 5px; }
.head-editor { grid-template-columns: 19px 161px 21.500px 158.500px 12px 27px 19px 183px 19px 181px 19px 154px 40px 1fr; padding-left: 4px; letter-spacing: .22px; }
.head-state { grid-template-columns: 19px 93px 12px 1fr; padding-left: 4px; letter-spacing: .15px; }
.head-palette { grid-template-columns: 21px 56px 12px 1fr; padding-left: 3px; letter-spacing: .1px; }
.head-props { grid-template-columns: 18px 80px 12px 27px 18px 64px 129px 30px 10px 1fr; padding-left: 5px; }
.head-props .ctl, .menu { margin-top: 7px; }
.menu { align-self: start; }
.overflow { font-size: 12px; margin-top: -7px; }
.overflow sub { font-size: 12px; }
.blk { color: #222; }
.minibar { height: 33px; flex: none; display: flex; align-items: center; justify-content: flex-end; gap: 12px; padding-right: 7px; }
.dis { opacity: .45; filter: grayscale(1); }
.tree { letter-spacing: .12px; }
.tree li { height: 23px; display: flex; align-items: center; color: #3c3c3c; }
.tree .tw { width: 9px; height: 9px; flex: none; margin: 0 5px 4px 0; }
.ic { width: 16px; height: 16px; flex: none; }
.tree .ic { margin: 0 3px 1px 0; }
.tree .l1 { padding-left: 11px; } .tree .l2 { padding-left: 22px; } .tree .l3 { padding-left: 33px; }
.tree .dk { color: #000; } .tree .off { color: #bdbdbd; }
.tree .sel { background: linear-gradient(#ebeae9, #dcdad8); }
.boxed { flex: 1; margin: 0 1px 2px; border: 1px solid #b5b2ab; background: #fff; padding-top: 1px; }
.outbody { position: relative; flex: 1; background: #fff; margin: 2px 2px 2px 1px; padding-left: 1px; }
.vbar { position: absolute; right: 0; top: 0; width: 3px; height: 283px; background: #f07746; }
.hbar { position: absolute; left: 0; bottom: 0; width: 211px; height: 3px; background: #f07746; }

/* report editor */
.edwrap { flex: 1; border: 2px solid #fff; display: flex; flex-direction: column; min-height: 0; background: #f2f1f0; overflow: hidden; }
.edbar { height: 31px; flex: none; display: grid; align-items: center; justify-items: center; padding-left: 1px; grid-template-columns: 698px 32px 30px 14px 30px 32px 190px 9px 35px 71px 1fr; }
.edbar > .mainrep { justify-self: start; }
.mainrep { width: 112px; height: 26px; border: 1px solid #aaa69f; border-radius: 4px; background: linear-gradient(#e3e1df, #efeeec); display: flex; align-items: center; gap: 4px; padding-left: 7px; margin-left: 1px; letter-spacing: .15px; }
.settings { letter-spacing: .15px; }
.zoomcombo { width: 187px; height: 26px; display: flex; border: 1px solid #d5d3d0; border-radius: 4px; background: #ebe9e8; }
.zoomcombo i { flex: 1; }
.zoomcombo em { width: 27px; border-left: 1px solid #d5d3d0; background: #f3f2f1; display: grid; place-items: center; }
.hruler { margin-left: 19px; }
.stage { height: 822px; flex: none; display: flex; }
.rl text { font-size: 13.500px; text-anchor: middle; fill: #333; }
.rl.far text { fill: #6e6e6e; }
.sheet { position: relative; padding: 11px 0 0 13px; }
.sheet::before { content: ""; position: absolute; left: 13px; top: 11px; width: 595px; height: 454px; box-shadow: 0 0 7px 1px rgba(0,0,0,.6); }
.page { position: relative; overflow: visible; }
.dj { font-family: "DejaVu Sans", sans-serif; }
.ghost { font-size: 16px; fill: #bdbdbd; }
.edtabs { flex: 1; display: flex; border-top: 1px solid #aaa9a2; line-height: 20px; }
.edtabs span { border-right: 1px solid #aaa9a2; text-align: center; width: 54px; }
.edtabs span.on { width: 53px; background: #fff; }
.edtabs span:last-child { width: 61px; }
.statetabs { height: 36px; margin-bottom: 1px; flex: none; display: grid; grid-template-columns: 81px 65px 100px; padding-left: 13px; align-items: center; letter-spacing: .12px; }
.console { flex: 1; margin: 0 2px 2px; border: 1px solid #bdb9b4; background: #fff; }

/* palette */
.palbar { height: 25px; flex: none; display: flex; gap: 6px; padding: 4px 0 0 8px; border-top: 1px solid #fff; }
.drawer { position: relative; margin: 0 1px 0 2px; background: #fff; overflow: hidden; border-top: 1px solid #a5a39d; letter-spacing: .15px; }
.drawer h3 { height: 22px; border-top: 1px solid #dddcda; margin-top: 1px; background: #f2f1f0; display: flex; align-items: center; gap: 3px; padding: 0 4px 2px 1px; color: #3c3c3c; }
.drawer h3 .pin { margin-left: auto; width: 11px; height: 9px; }
.drawer ul { padding: 1px 0 0 15px; }
.drawer li { height: 24px; display: flex; align-items: center; gap: 3px; color: #3c3c3c; }
.drawer .more { position: absolute; left: 180px; bottom: 0; width: 76px; height: 7px; background: #bebbb6; display: grid; place-items: center; }
.d1 { height: 127px; flex: none; } .d2 { height: 128px; flex: none; } .d3 { flex: 1; margin-bottom: 1px; }

/* properties */
.props { flex: 1; position: relative; overflow: visible; min-height: 0; }
.props .shape { border-radius: 8px 8px 0 0; overflow: hidden; }
.pbody { position: relative; flex: 1; min-height: 0; border: 2px solid #f59d7e; background: #fff; overflow: hidden; }
.ptitle { display: grid; grid-template-columns: 157px 278px; height: 27px; }
.ptitle h2 { background: linear-gradient(90deg, #fff, #fde9e1); color: #f07746; font-weight: bold; font-size: 16.500px; line-height: 27px; padding-left: 4px; }
.search { height: 24px; margin-top: 1px; border: 1px solid #b5b2ab; color: #f07746; padding: 0 5px 0 2px; display: flex; align-items: center; justify-content: space-between; letter-spacing: .1px; }
.search svg { fill: #000; }
.ptabs { height: 42px; display: grid; grid-template-columns: 108px 84px 90px; padding: 8px 0 0 16px; border-bottom: 1px solid #d8d7d5; align-items: start; }
.pt { display: flex; height: 26px; align-items: center; gap: 3px; }
.pt.on { width: 76px; border: 1px solid #aaa69f; border-radius: 4px; background: linear-gradient(#e3e1df, #efeeec); padding-left: 6px; }
.form { padding: 14px 0 0 13px; }
.row { display: grid; height: 34px; align-items: start; grid-template-columns: 148px 232px 27px; }
.row label { line-height: 26px; }
.inp { height: 25px; border: 1px solid #c4c2be; background: #fff; }
.dots { justify-self: end; margin-top: -1px; width: 22px; height: 27px; border: 1px solid #b5b2ac; border-radius: 4px; background: linear-gradient(#fff, #eae8e6); text-align: center; line-height: 27px; }
.r2, .s1, .s3 { height: 33px; }
.s1, .s2 { grid-template-columns: 199px 181px 27px; }
.combo { height: 25px; width: 180px; border: 1px solid #b5b2ac; border-radius: 4px; background: linear-gradient(#fff, #f0eeec); display: flex; align-items: center; justify-content: space-between; padding: 0 8px 0 6px; }
.combo.focus { margin: -1px 0 0 2px; border-color: #ee875f; box-shadow: 0 0 1px 1px rgba(240,119,70,.3); }
.s1 .combo { width: 79px; margin-left: 2px; }
.chk { height: 29px; display: flex; align-items: center; gap: 7px; }
.chk i { width: 14px; height: 14px; border: 1px solid #8f8d88; border-radius: 3px; background: #fff; }
.r3 + .chk { margin-top: -6px; }
h4 { display: flex; align-items: center; gap: 6px; font-weight: bold; height: 22px; border-bottom: 1px solid #d8d7d5; }
h4 i { width: 9px; height: 9px; border: 1px solid #8f8d88; line-height: 6px; font-size: 9px; text-align: center; margin-left: 1px; }
.h-data { margin: 11px 10px 11px -8px; }
.h-page { margin: 14px 10px 27px -8px; }
.edit span { display: block; width: 232px; height: 27px; margin-left: 72px; border: 1px solid #b5b2ac; border-radius: 4px; background: linear-gradient(#fff, #eae8e6); text-align: center; line-height: 25px; }
.fmt { display: grid; grid-template-columns: 78px 64px auto; justify-content: start; padding-left: 106px; }
.thumb { width: 80px; height: 100px; border: 2px solid #fff; outline: 1px solid #ccc; box-shadow: inset 0 0 0 1px #dcd8f5, 0 0 5px 2px rgba(0,0,0,.5); }
.pg { margin: -1px 0 0 22px; }
.dim { line-height: 17px; margin-top: -6px; }
.scroll { position: absolute; right: 0; top: 124px; width: 3px; height: 405px; background: #f07746; }
.tip { position: absolute; left: 94px; top: 213px; width: 352px; height: 59px; padding: 4px; border-radius: 5px; background: rgba(0,0,0,.9); color: #fff; display: flex; flex-direction: column; font-size: 14.100px; }
.tip span { line-height: 17px; }

.status { flex: 1; display: grid; align-items: center; grid-template-columns: 8px 76px 1468px 5px 1fr; }
.status svg { margin-left: 13px; }
.msg { font-size: 14.200px; margin-top: -2px; }
.prev { padding-left: 2px; }
```
